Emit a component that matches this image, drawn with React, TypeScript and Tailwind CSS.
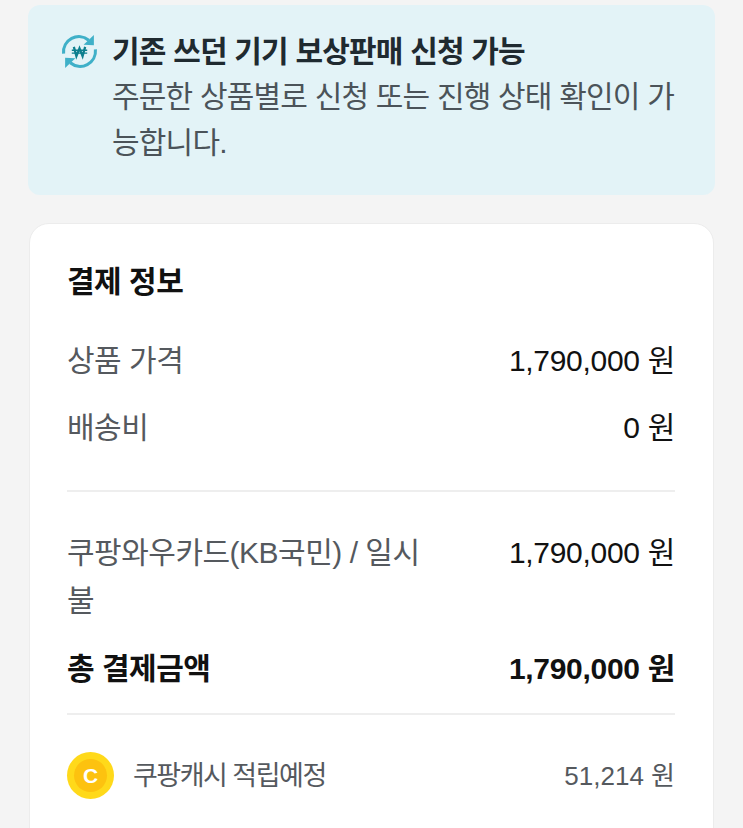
const fontStack = { fontFamily: '"Liberation Sans", "Noto Sans CJK KR", sans-serif' }

function SwapWonIcon() {
  return (
    <svg width="37" height="37" viewBox="0 0 36 36" fill="none" className="shrink-0">
      <path d="M2.5 20 A15 15 0 0 1 27 7" stroke="#3fb0c8" strokeWidth="3" />
      <path d="M32 2 L32 12 L22 11.5 Z" fill="#3fb0c8" />
      <path d="M33.5 16 A15 15 0 0 1 9 29" stroke="#3fb0c8" strokeWidth="3" />
      <path d="M4 34 L4 24 L14 24.5 Z" fill="#3fb0c8" />
      <path d="M12.5 13.5 L15 22.5 L18 15 L21 22.5 L23.5 13.5" stroke="#0c7f8e" strokeWidth="2.2" />
      <path d="M10.5 16.8 H25.5 M10.5 19.6 H25.5" stroke="#0c7f8e" strokeWidth="1.3" />
    </svg>
  )
}

function PriceRow({ label, value, className = '' }: { label: string; value: string; className?: string }) {
  return (
    <div className={`flex justify-between items-start ${className}`}>
      <span className="w-[360px] text-[#55595e] text-[30px] leading-[48px] tracking-[-0.5px]">{label}</span>
      <span className="text-[#111] text-[30px] leading-[48px] tracking-[-0.3px]">{value}</span>
    </div>
  )
}

export default function App() {
  return (
    <div className="w-[743px] h-[828px] overflow-hidden bg-[#f4f4f4] px-[28px] pt-[5px]" style={fontStack}>
      <div className="h-[190px] rounded-xl bg-[#e3f3f7] pl-[33px] pr-[36px] pt-[24px] flex gap-[14px]">
        <div className="pt-[4px]"><SwapWonIcon /></div>
        <div>
          <h2 className="text-[#1f2a30] text-[30px] leading-[45px] font-bold tracking-[-0.8px]">기존 쓰던 기기 보상판매 신청 가능</h2>
          <p className="text-[#4b5359] text-[30px] leading-[46px] tracking-[-0.8px]">주문한 상품별로 신청 또는 진행 상태 확인이 가능합니다.</p>
        </div>
      </div>

      <div className="mt-[28px] mx-[1px] h-[640px] rounded-[20px] bg-white border border-[#ececec] pl-[37px] pr-[38px] pt-[34px]">
        <h3 className="text-[#111] text-[30px] leading-[48px] font-bold tracking-[-0.5px]">결제 정보</h3>
        <PriceRow label="상품 가격" value="1,790,000 원" className="mt-[31px]" />
        <PriceRow label="배송비" value="0 원" className="mt-[19px]" />
        <div className="h-[2px] bg-[#eeeeee] mt-[38px]" />
        <PriceRow label="쿠팡와우카드(KB국민) / 일시불" value="1,790,000 원" className="mt-[37px]" />
        <div className="flex justify-between items-start mt-[20px]">
          <span className="text-[#111] text-[30px] leading-[48px] font-bold tracking-[-0.5px]">총 결제금액</span>
          <span className="text-[#111] text-[30px] leading-[48px] font-bold tracking-[-0.3px]">1,790,000 원</span>
        </div>
        <div className="h-[2px] bg-[#eeeeee] mt-[20px]" />
        <div className="flex justify-between items-center mt-[37px]">
          <div className="flex items-center gap-[19px]">
            <div className="w-[47px] h-[47px] rounded-full bg-[#ffd91a] flex items-center justify-center">
              <div className="w-[33px] h-[33px] rounded-full bg-[#fdc20f] flex items-center justify-center text-white text-[21px] font-bold">C</div>
            </div>
            <span className="text-[#55595e] text-[27px] leading-[40px] tracking-[-1.5px]">쿠팡캐시 적립예정</span>
          </div>
          <span className="text-[#55595e] text-[26px] leading-[40px]">51,214 원</span>
        </div>
      </div>
    </div>
  )
}
